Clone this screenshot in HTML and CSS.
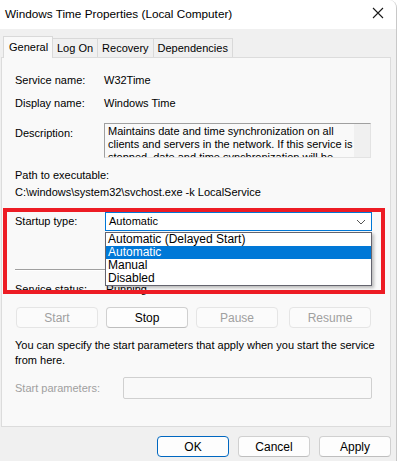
FILE: index.html
```html
<!doctype html>
<html lang="en">

<head>
    <meta charset="utf-8">
    <title>Windows Time Properties (Local Computer)</title>
    <link rel="stylesheet" href="styles.css">
</head>

<body>
    <div class="dlg-window">
        <div class="dlg-titlebar">
            <span class="dlg-title">Windows Time Properties (Local Computer)</span>
            <svg class="dlg-close" width="12" height="12" viewBox="0 0 12 12">
                <path d="M1 1 L11 11 M11 1 L1 11" stroke="#1a1a1a" stroke-width="1.1" fill="none"/>
            </svg>
        </div>

        <div class="dlg-body">
            <div class="dlg-tabs">
                <div class="dlg-tab dlg-tab-active">General</div>
                <div class="dlg-tab">Log On</div>
                <div class="dlg-tab">Recovery</div>
                <div class="dlg-tab">Dependencies</div>
            </div>

            <div class="dlg-panel">
                <div class="dlg-row dlg-row-first">
                    <div class="dlg-label">Service name:</div>
                    <div class="dlg-value">W32Time</div>
                </div>
                <div class="dlg-row dlg-row-display">
                    <div class="dlg-label">Display name:</div>
                    <div class="dlg-value">Windows Time</div>
                </div>
                <div class="dlg-row dlg-row-desc">
                    <div class="dlg-label dlg-label-desc">Description:</div>
                    <div class="dlg-descbox">
                        <div class="dlg-desctext">
                            <span>Maintains date and time synchronization on all</span>
                            <span>clients and servers in the network. If this service is</span>
                            <span>stopped, date and time synchronization will be</span>
                        </div>
                        <div class="dlg-scroll"></div>
                    </div>
                </div>
                <div class="dlg-path-label">Path to executable:</div>
                <div class="dlg-path">C:\windows\system32\svchost.exe -k LocalService</div>

                <div class="dlg-row dlg-row-startup">
                    <div class="dlg-label dlg-label-startup">Startup type:</div>
                    <div class="dlg-select">
                        <span>Automatic</span>
                        <svg class="dlg-chevron" width="10" height="6" viewBox="0 0 10 6">
                            <path d="M1 1 L5 5 L9 1" stroke="#555" stroke-width="1" fill="none"/>
                        </svg>
                    </div>
                </div>

                <div class="dlg-separator"></div>

                <div class="dlg-row dlg-row-status">
                    <div class="dlg-label dlg-label-status">Service status:</div>
                    <div class="dlg-value">Running</div>
                </div>

                <div class="dlg-svcbuttons">
                    <button class="dlg-btn dlg-btn-off">Start</button>
                    <button class="dlg-btn">Stop</button>
                    <button class="dlg-btn dlg-btn-off">Pause</button>
                    <button class="dlg-btn dlg-btn-off dlg-btn-resume">Resume</button>
                </div>

                <div class="dlg-note">
                    You can specify the start parameters that apply when you start the service<br>
                    from here.
                </div>

                <div class="dlg-row dlg-row-params">
                    <div class="dlg-label dlg-label-params">Start parameters:</div>
                    <div class="dlg-input"></div>
                </div>

                <!-- open dropdown of the startup type -->
                <ul class="dlg-dropdown">
                    <li>Automatic (Delayed Start)</li>
                    <li class="dlg-dropdown-sel">Automatic</li>
                    <li>Manual</li>
                    <li>Disabled</li>
                </ul>

                <!-- red marker drawn over the screenshot -->
                <div class="dlg-highlight"></div>
            </div>

            <div class="dlg-footer">
                <button class="dlg-btn dlg-btn-foot dlg-btn-default">OK</button>
                <button class="dlg-btn dlg-btn-foot">Cancel</button>
                <button class="dlg-btn dlg-btn-foot">Apply</button>
            </div>
        </div>
    </div>
</body>

</html>
```

FILE: styles.css
```css
html,
body {
    margin: 0;
    background-color: rgb(255, 255, 255);
    color: rgb(0, 0, 0);
    font-family: "Liberation Sans", Arial, sans-serif;
    font-size: 11px;
}

.dlg-window {
    width: 396px;
    height: 461px;
    border-right: 1px solid rgb(200, 200, 200);
    border-top-right-radius: 8px;
    background-color: rgb(240, 240, 240);
    overflow: hidden;
}

.dlg-titlebar {
    height: 29px;
    background-color: rgb(255, 255, 255);
    display: flex;
    align-items: center;
    padding-left: 5px;
}

.dlg-title {
    font-size: 11.75px;
    flex: 1;
    padding-bottom: 2px;
}

.dlg-close {
    margin-right: 12px;
    margin-bottom: 3px;
}

.dlg-body {
    padding: 7px 0 0 1px;
}

/* tabs */
.dlg-tabs {
    display: flex;
    align-items: flex-end;
    margin-left: 2px;
    height: 21px;
    position: relative;
    z-index: 1;
}

.dlg-tab {
    height: 19px;
    box-sizing: border-box;
    border: 1px solid rgb(217, 217, 217);
    border-bottom: none;
    margin-left: -1px;
    padding: 3px 4px 0 4px;
    font-size: 11px;
    background-color: rgb(240, 240, 240);
}

.dlg-tab-active {
    height: 22px;
    margin-left: 0;
    margin-bottom: -1px;
    padding: 4px 0 0 5px;
    background-color: rgb(249, 249, 249);
    width: 50px;
}

.dlg-panel {
    position: relative;
    box-sizing: border-box;
    width: 390px;
    height: 370px;
    border: 1px solid rgb(220, 220, 220);
    background-color: rgb(249, 249, 249);
    padding-left: 13px;
    padding-top: 16px;
}

.dlg-row {
    display: flex;
    align-items: center;
    line-height: 13px;
}

.dlg-label {
    width: 89px;
    flex: none;
}

.dlg-row-display {
    margin-top: 10px;
}

.dlg-row-desc {
    margin-top: 13px;
    align-items: flex-start;
}

.dlg-label-desc {
    margin-top: 4px;
}

.dlg-descbox {
    display: flex;
    box-sizing: border-box;
    width: 267px;
    height: 35px;
    border: 1px solid rgb(160, 160, 160);
    border-right-color: rgb(227, 227, 227);
    border-bottom-color: rgb(227, 227, 227);
    overflow: hidden;
}

.dlg-desctext {
    flex: 1;
    padding: 1px 0 0 3px;
    white-space: nowrap;
    overflow: hidden;
}

.dlg-desctext span {
    display: block;
}

.dlg-scroll {
    width: 16px;
    background-color: rgb(240, 240, 240);
}

.dlg-path-label {
    margin-top: 11px;
    line-height: 13px;
}

.dlg-path {
    margin-top: 4px;
    line-height: 13px;
}

.dlg-row-startup {
    margin-top: 13px;
}

.dlg-label-startup {
    width: 90px;
}

.dlg-select {
    box-sizing: border-box;
    width: 267px;
    height: 19px;
    border: 1px solid rgb(0, 120, 215);
    background-color: rgb(255, 255, 255);
    display: flex;
    align-items: center;
    justify-content: space-between;
    padding: 0 5px 0 3px;
    font-size: 11px;
}

.dlg-chevron {
    margin-top: 1px;
}

.dlg-separator {
    margin-top: 38px;
    width: 357px;
    height: 1px;
    background-color: rgb(160, 160, 160);
    border-bottom: 1px solid rgb(255, 255, 255);
}

.dlg-row-status {
    margin-top: 12px;
}

.dlg-label-status {
    width: 91px;
}

.dlg-svcbuttons {
    display: flex;
    margin-top: 11px;
    margin-left: 1px;
    gap: 8px;
}

.dlg-btn {
    box-sizing: border-box;
    width: 82px;
    height: 21px;
    border: 1px solid rgb(208, 208, 208);
    border-bottom-color: rgb(190, 190, 190);
    border-radius: 4px;
    background-color: rgb(253, 253, 253);
    font-family: "Liberation Sans", Arial, sans-serif;
    font-size: 12px;
    color: rgb(0, 0, 0);
    padding: 0;
}

.dlg-btn-off {
    color: rgb(160, 160, 160);
    border-color: rgb(229, 229, 229);
    background-color: rgb(251, 251, 251);
}

.dlg-btn-resume {
    margin-left: 3px;
}

.dlg-note {
    margin-top: 10px;
    line-height: 15px;
}

.dlg-row-params {
    margin-top: 9px;
}

.dlg-label-params {
    width: 108px;
    color: rgb(160, 160, 160);
}

.dlg-input {
    box-sizing: border-box;
    width: 249px;
    height: 22px;
    border: 1px solid rgb(208, 208, 208);
    border-radius: 2px;
    background-color: rgb(249, 249, 249);
}

/* open select list */
.dlg-dropdown {
    position: absolute;
    left: 103px;
    top: 174px;
    width: 267px;
    box-sizing: border-box;
    margin: 0;
    padding: 0;
    list-style: none;
    background-color: rgb(255, 255, 255);
    border: 1px solid rgb(100, 100, 110);
    box-shadow: 2px 2px 3px rgba(0, 0, 0, 0.25);
    font-size: 12px;
}

.dlg-dropdown li {
    height: 13px;
    line-height: 13px;
    padding-left: 2px;
}

.dlg-dropdown-sel {
    background-color: rgb(0, 120, 215);
    color: rgb(255, 255, 255);
}

.dlg-highlight {
    position: absolute;
    left: 1px;
    top: 150px;
    width: 382px;
    height: 86px;
    box-sizing: border-box;
    border: 4px solid rgb(237, 28, 36);
}

.dlg-footer {
    display: flex;
    justify-content: flex-end;
    gap: 9px;
    width: 390px;
    margin-top: 9px;
}

.dlg-btn-foot {
    width: 72px;
}

.dlg-btn-default {
    border-color: rgb(0, 103, 192);
}
```
